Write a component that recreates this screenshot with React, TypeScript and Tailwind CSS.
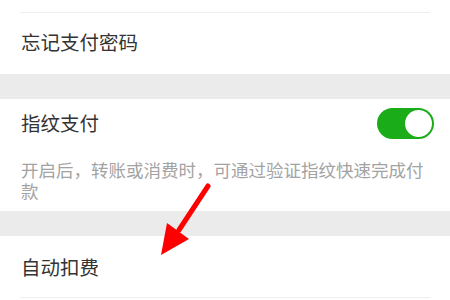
const font = { fontFamily: '"Noto Sans CJK SC", "Noto Sans", sans-serif' };

const Toggle = () => (
  <div className="flex h-[31px] w-[57px] items-center justify-end rounded-full bg-[#1aad19] p-[2px]">
    <div className="h-[27px] w-[27px] rounded-full bg-white" />
  </div>
);

export default function App() {
  return (
    <div className="relative h-[300px] w-[450px] overflow-hidden bg-[#ebebeb]" style={font}>
      {/* first group */}
      <div className="bg-white pt-[12px]">
        <div className="mx-[20px] h-px bg-[#efefef]" />
        <div className="flex h-[61px] items-center px-[21px] pb-[3px] text-[19.5px] text-[#333]">
          忘记支付密码
        </div>
      </div>

      <div className="h-[25px]" />

      {/* fingerprint group */}
      <div className="bg-white pb-[10px]">
        <div className="flex h-[48px] items-center justify-between pl-[21px] pr-[16px] text-[19.5px] text-[#333]">
          <span>指纹支付</span>
          <Toggle />
        </div>
        <p className="mt-[12px] px-[21px] text-[17.5px] leading-[21px] text-[#a3a3a3]">
          开启后，转账或消费时，可通过验证指纹快速完成付款
        </p>
      </div>

      <div className="h-[25px]" />

      {/* auto deduction */}
      <div className="bg-white">
        <div className="flex h-[61px] items-center px-[21px] text-[19.5px] text-[#333]">
          自动扣费
        </div>
        <div className="mx-[20px] h-px bg-[#efefef]" />
        <div className="h-[10px]" />
      </div>

      {/* red arrow annotation */}
      <svg className="absolute left-0 top-0" width="450" height="300" viewBox="0 0 450 300">
        <line x1="208" y1="186" x2="179" y2="230" stroke="#ff0000" strokeWidth="5" strokeLinecap="round" />
        <polygon points="161,255 167,223 189,239" fill="#ff0000" />
      </svg>
    </div>
  );
}
